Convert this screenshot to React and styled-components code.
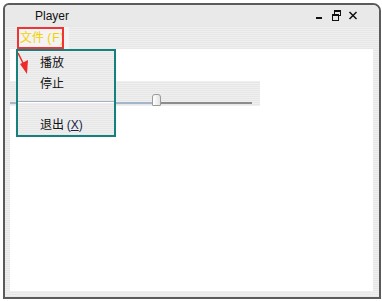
import React from "react";
import styled, { createGlobalStyle } from "styled-components";

const GlobalStyle = createGlobalStyle`
  html, body { margin: 0; padding: 0; background: #ffffff; }
  body { font-family: "Liberation Sans", "Noto Sans CJK SC", sans-serif; }
`;

const stripes = `repeating-linear-gradient(to bottom, #efefef 0px, #efefef 1px, #e7e7e7 1px, #e7e7e7 2px)`;

const Window = styled.div`
  position: relative;
  margin: 3px 0 0 3px;
  width: 378px;
  height: 296px;
  box-sizing: border-box;
  border: 2px solid #5b5b5b;
  border-radius: 6px 8px 0 0;
  background: ${stripes};
  display: flex;
  flex-direction: column;
`;

const TitleBar = styled.div`
  height: 21px;
  display: flex;
  align-items: center;
  padding-left: 30px;
  padding-right: 20px;
  background: #e9e9e9;
  border-radius: 5px 6px 0 0;
`;

const Title = styled.span`
  font-family: "Liberation Sans", sans-serif;
  font-size: 12px;
  color: #111;
  flex: 1;
`;

const Controls = styled.div`
  display: flex;
  gap: 5px;
`;

const ControlButton = styled.svg`
  width: 12px;
  height: 12px;
  display: block;
`;

const Body = styled.div`
  flex: 1;
  display: flex;
  flex-direction: column;
  padding: 1px 6px 6px 5px;
`;

const MenuBar = styled.div`
  height: 22px;
  display: flex;
  align-items: stretch;
  background: ${stripes};
`;

const MenuSlot = styled.div`
  margin-left: 7px;
  width: 52px;
  background: #f3f3f3;
`;

const MenuTitle = styled.div`
  width: 47px;
  height: 100%;
  box-sizing: border-box;
  border: 2px solid #ee3434;
  padding-left: 1px;
  overflow: hidden;
  white-space: nowrap;
  font-family: "Liberation Sans", "Noto Sans CJK SC", sans-serif;
  font-size: 12px;
  line-height: 18px;
  color: #f4d000;
`;

const Latin = styled.span`
  letter-spacing: 0.8px;
`;

const Content = styled.div`
  flex: 1;
  background: #ffffff;
`;

const SliderPanel = styled.div`
  margin-top: 32px;
  width: 250px;
  height: 25px;
  background: ${stripes};
  position: relative;
`;

const Track = styled.div`
  position: absolute;
  left: 0;
  top: 21px;
  width: 242px;
  height: 2px;
  background: linear-gradient(to right, #a3b6cc 0, #a3b6cc 142px, #8c8c8c 142px);
`;

const Thumb = styled.div`
  position: absolute;
  left: 142px;
  top: 13px;
  width: 9px;
  height: 12px;
  box-sizing: border-box;
  border: 1px solid #9a9a9a;
  border-radius: 3px 3px 1px 1px;
  background: linear-gradient(to right, #ffffff, #e4e4e4);
`;

const Popup = styled.div`
  position: absolute;
  left: 11px;
  top: 44px;
  width: 100px;
  height: 88px;
  box-sizing: border-box;
  border: 2px solid #15807c;
  background: ${stripes};
  display: flex;
  flex-direction: column;
`;

const MenuItem = styled.div`
  height: ${(p) => p.$h || 21}px;
  line-height: ${(p) => p.$h || 21}px;
  padding-left: 22px;
  font-family: "Noto Sans CJK SC", "Liberation Sans", sans-serif;
  font-size: 12px;
  color: #111;
`;

const Mnemonic = styled.span`
  font-family: "Liberation Sans", sans-serif;
  color: #1a1f4a;
  u { text-decoration: underline; }
`;

const Separator = styled.div`
  height: 20px;
  position: relative;
  &::before {
    content: "";
    position: absolute;
    left: 0;
    right: 0;
    top: 8px;
    height: 1px;
    background: #a4b2c2;
    box-shadow: 0 1px 0 #ffffff;
  }
`;

const Arrow = styled.svg`
  position: absolute;
  left: 13px;
  top: 47px;
  width: 14px;
  height: 22px;
  overflow: visible;
`;

export default function App() {
  return (
    <>
      <GlobalStyle />
      <Window>
        <TitleBar>
          <Title>Player</Title>
          <Controls>
            <ControlButton viewBox="0 0 12 12">
              <rect x="3" y="7" width="6" height="2" fill="#111" />
            </ControlButton>
            <ControlButton viewBox="0 0 12 12">
              <rect x="4.5" y="0.5" width="6" height="5" fill="none" stroke="#111" />
              <rect x="4" y="0" width="7" height="2" fill="#111" />
              <rect x="2.5" y="4.5" width="6" height="6" fill="#e9e9e9" stroke="#111" />
              <rect x="2" y="4" width="7" height="2" fill="#111" />
            </ControlButton>
            <ControlButton viewBox="0 0 12 12">
              <path d="M2.5 2 L9.5 9 M9.5 2 L2.5 9" stroke="#111" strokeWidth="1.5" />
            </ControlButton>
          </Controls>
        </TitleBar>
        <Body>
          <MenuBar>
            <MenuSlot>
              <MenuTitle>
                文件 <Latin>(F)</Latin>
              </MenuTitle>
            </MenuSlot>
          </MenuBar>
          <Content>
            <SliderPanel>
              <Track />
              <Thumb />
            </SliderPanel>
          </Content>
        </Body>
        <Popup>
          <MenuItem>播放</MenuItem>
          <MenuItem>停止</MenuItem>
          <Separator />
          <MenuItem $h={22}>
            退出 <Mnemonic>(<u>X</u>)</Mnemonic>
          </MenuItem>
        </Popup>
        <Arrow viewBox="0 0 14 22">
          <line x1="0" y1="1" x2="6" y2="13" stroke="#ee2b2b" strokeWidth="1.5" />
          <polygon points="2,12 10,8 9,22" fill="#ee2b2b" />
        </Arrow>
      </Window>
    </>
  );
}
